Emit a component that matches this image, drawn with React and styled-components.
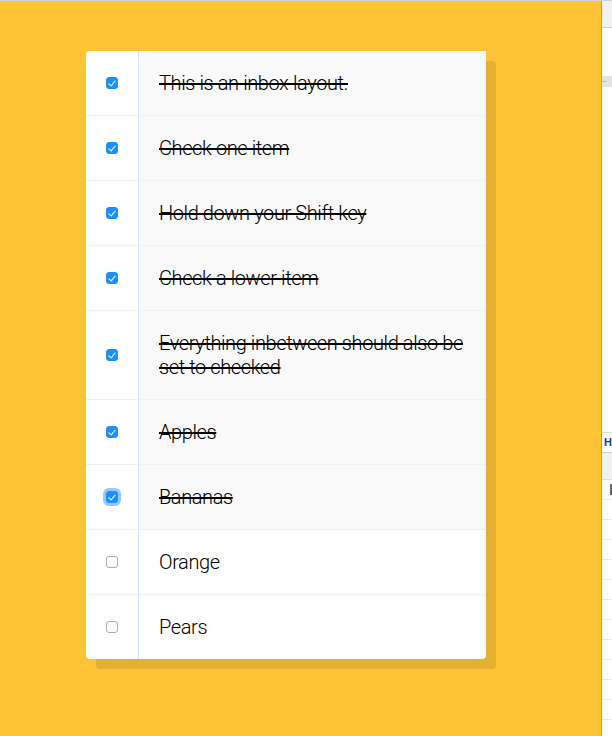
import React from 'react';
import styled, { createGlobalStyle } from 'styled-components';

const GlobalStyle = createGlobalStyle`
  html, body {
    margin: 0;
    padding: 0;
  }
  body {
    background: #ffc435;
    font-family: 'Helvetica Neue', Roboto, 'Liberation Sans', sans-serif;
  }
`;

const initialItems = [
  { text: 'This is an inbox layout.', checked: true },
  { text: 'Check one item', checked: true },
  { text: 'Hold down your Shift key', checked: true },
  { text: 'Check a lower item', checked: true },
  { text: 'Everything inbetween should also be set to checked', checked: true },
  { text: 'Apples', checked: true },
  { text: 'Bananas', checked: true, focused: true },
  { text: 'Orange', checked: false },
  { text: 'Pears', checked: false },
];

function App() {
  const [items, setItems] = React.useState(initialItems);
  // remember the last box clicked so shift+click can fill the range
  const lastChecked = React.useRef(6);

  const handleCheck = (index, e) => {
    const value = e.target.checked;
    setItems((prev) => {
      const next = prev.map((item) => ({ ...item, focused: false }));
      if (e.nativeEvent.shiftKey && lastChecked.current !== null && value) {
        const from = Math.min(index, lastChecked.current);
        const to = Math.max(index, lastChecked.current);
        for (let i = from; i <= to; i++) next[i].checked = true;
      }
      next[index].checked = value;
      next[index].focused = true;
      return next;
    });
    lastChecked.current = index;
  };

  return (
    <>
      <GlobalStyle />
      <Frame>
        <Stage>
          <Inbox>
            {items.map((item, i) => (
              <Item key={item.text}>
                <Check
                  type="checkbox"
                  checked={item.checked}
                  $focused={item.focused}
                  onChange={(e) => handleCheck(i, e)}
                />
                <Label $checked={item.checked}>{item.text}</Label>
              </Item>
            ))}
          </Inbox>
        </Stage>
        <DevPanel>
          <PanelHeader />
          <Splitter>··</Splitter>
          <PanelSection>
            <SectionTitle>H</SectionTitle>
            <SectionHead />
            <SectionRow>
              <TinyBox />
            </SectionRow>
            {Array.from({ length: 11 }).map((_, i) => (
              <SectionRow key={i} />
            ))}
          </PanelSection>
        </DevPanel>
      </Frame>
    </>
  );
}

const Frame = styled.div`
  display: flex;
  height: 735px;
  border-top: 1px solid #d2d2d2;
  overflow: hidden;
`;

const Stage = styled.div`
  flex: 1;
  background: #ffc435;
`;

const Inbox = styled.div`
  width: 400px;
  margin: 50px 0 0 86px;
  background: white;
  border-radius: 4px;
  box-shadow: 10px 10px 0 rgba(0, 0, 0, 0.1);
`;

const Item = styled.div`
  display: flex;
  align-items: center;
  border-bottom: 1px solid #f1f1f1;

  &:last-child {
    border-bottom: 0;
  }
`;

const Check = styled.input`
  appearance: none;
  position: relative;
  flex: none;
  width: 12px;
  height: 12px;
  margin: 20px;
  border-radius: 3px;
  border: 1px solid #ababab;
  background: white;
  box-sizing: border-box;

  &:checked {
    background: #1b8ffb;
    border-color: #1b8ffb;
  }

  &:checked::after {
    content: '';
    position: absolute;
    left: 3px;
    top: 0.5px;
    width: 3px;
    height: 6px;
    border: solid white;
    border-width: 0 1.8px 1.8px 0;
    transform: rotate(40deg);
  }

  box-shadow: ${(p) => (p.$focused ? '0 0 0 3px rgba(60, 155, 250, 0.55)' : 'none')};
`;

const Label = styled.p`
  margin: 0;
  padding: 20px;
  flex: 1;
  font-size: 20px;
  font-weight: 300;
  line-height: 24px;
  letter-spacing: -0.4px;
  color: #000;
  border-left: 1px solid #d1e2ff;
  background: ${(p) => (p.$checked ? '#f9f9f9' : 'transparent')};
  text-decoration: ${(p) => (p.$checked ? 'line-through' : 'none')};
`;

const DevPanel = styled.div`
  width: 10px;
  flex: none;
  border-left: 1px solid #9c9c9c;
  background: white;
  display: flex;
  flex-direction: column;
  overflow: hidden;
  font-family: 'Liberation Sans', sans-serif;
`;

const PanelHeader = styled.div`
  height: 26px;
  background: #f2f2f2;
  border-bottom: 1px solid #cfcfcf;
`;

const Splitter = styled.div`
  margin-top: 48px;
  height: 11px;
  background: #e3e3e3;
  color: #8a8a8a;
  font-size: 9px;
  line-height: 11px;
  letter-spacing: -1px;
`;

const PanelSection = styled.div`
  margin-top: auto;
  height: 303px;
  border-top: 1px solid #dcdcdc;
`;

const SectionTitle = styled.div`
  height: 19px;
  padding-left: 2px;
  font-size: 11px;
  line-height: 19px;
  color: #1a3f8f;
  font-weight: bold;
`;

const SectionHead = styled.div`
  height: 26px;
  background: #f1f1f1;
  border-top: 1px solid #cfcfcf;
  border-bottom: 1px solid #dcdcdc;
`;

const SectionRow = styled.div`
  height: 19px;
  border-bottom: 1px solid #ececec;
  display: flex;
  align-items: center;
`;

const TinyBox = styled.span`
  margin-left: 8px;
  width: 8px;
  height: 9px;
  border: 1px solid #666;
`;

export default App;
